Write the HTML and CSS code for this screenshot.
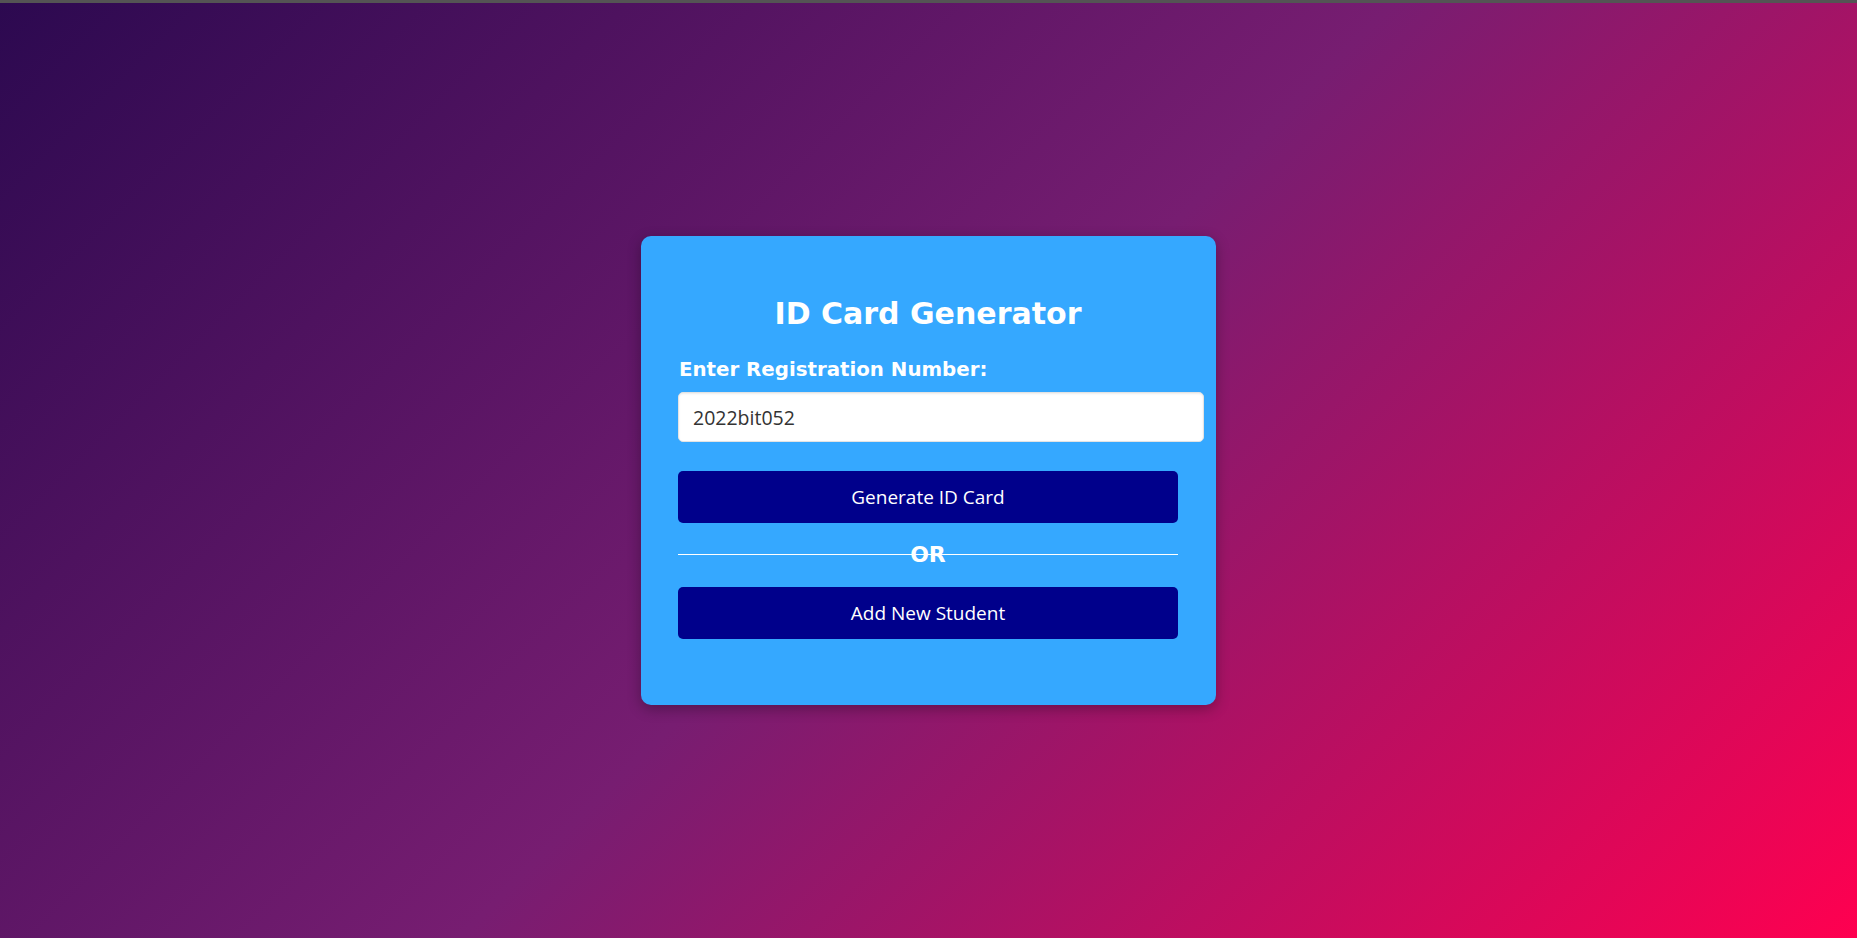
FILE: index.html
```html
<!DOCTYPE html>
<html lang="en">
<head>
<meta charset="utf-8">
<title>ID Card Generator</title>
<link rel="stylesheet" href="styles.css">
</head>
<body>
<div class="topbar"></div>
<main class="page">
  <section class="card">
    <h2 class="title">ID Card Generator</h2>
    <form class="form">
      <label class="label" for="reg">Enter Registration Number:</label>
      <input class="input" id="reg" type="text" value="2022bit052">
      <button class="btn" type="button">Generate ID Card</button>
      <div class="divider"><span class="divider-text">OR</span></div>
      <button class="btn btn-last" type="button">Add New Student</button>
    </form>
  </section>
</main>
</body>
</html>
```
FILE: styles.css
```css
html, body {
  margin: 0;
  padding: 0;
  height: 100%;
}

body {
  display: flex;
  flex-direction: column;
  font-family: "DejaVu Sans", Verdana, sans-serif;
  background: linear-gradient(135deg, #2c0950 0%, #771d71 50%, #ff0050 100%);
  overflow: hidden;
}

.topbar {
  height: 3px;
  background: #545454;
  flex: none;
}

.page {
  flex: 1;
  display: flex;
  align-items: center;
  justify-content: center;
}

.card {
  width: 500px;
  padding: 37px 38px 37px 37px;
  background: #35a8ff;
  border-radius: 10px;
  box-shadow: 0 4px 14px rgba(0, 0, 0, 0.3);
  color: #fff;
}

.title {
  margin: 23px 0 27px;
  text-align: center;
  font-size: 30px;
  font-weight: bold;
  line-height: 35px;
}

.form {
  display: flex;
  flex-direction: column;
  align-items: flex-start;
}

.label {
  font-size: 19.8px;
  font-weight: bold;
  line-height: 23px;
  margin-bottom: 11px;
  padding-left: 1px;
}

.input {
  box-sizing: border-box;
  width: 526px;
  height: 50px;
  padding: 0 14px;
  border: 1px solid #e3e3e3;
  border-radius: 5px;
  background: #fff;
  font-family: "Open Sans", sans-serif;
  font-size: 19.5px;
  color: #333;
  box-shadow: inset 0 1px 2px rgba(0, 0, 0, 0.08);
  outline: none;
  margin-bottom: 29px;
}

.btn {
  width: 500px;
  height: 52px;
  border: none;
  border-radius: 5px;
  background: #00008b;
  color: #fff;
  font-family: "Open Sans", sans-serif;
  font-size: 19px;
  cursor: pointer;
}

.btn-last {
  margin-bottom: 29px;
}

.divider {
  position: relative;
  width: 500px;
  height: 64px;
  display: flex;
  align-items: center;
  justify-content: center;
}

.divider::before {
  content: "";
  position: absolute;
  left: 0;
  right: 0;
  top: 31px;
  height: 1px;
  background: #fff;
}

.divider-text {
  position: relative;
  font-size: 22px;
  font-weight: bold;
  line-height: 26px;
  color: #fff;
}
```
